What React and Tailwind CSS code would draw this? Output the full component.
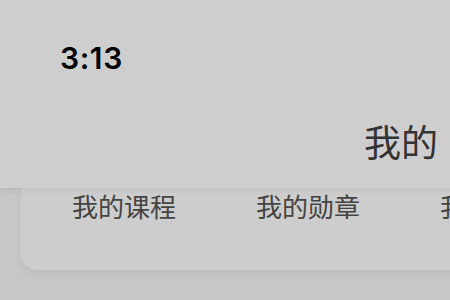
export default function App() {
  const menu = ['我的课程', '我的勋章', '我的收藏']

  return (
    <div className="w-[450px] h-[300px] overflow-hidden bg-[#c7c7c7] font-['Noto_Sans_CJK_SC',sans-serif]">
      {/* Header */}
      <div className="relative z-10 h-[188px] bg-[#cecece] shadow-[0_2px_6px_rgba(0,0,0,0.08)] flex flex-col">
        <div className="pl-[60px] pt-[43px] h-[88px]">
          <span className="font-['Inter',sans-serif] font-semibold text-[30px] tracking-[0.6px] leading-none text-black">
            3:13
          </span>
        </div>
        <div className="flex justify-end pr-[12px] pt-[35px]">
          <span className="text-[37px] leading-none text-[#333]">我的</span>
        </div>
      </div>

      {/* Menu card */}
      <div className="ml-[21px] w-[460px] h-[82px] bg-[#cdcdcd] rounded-bl-2xl shadow-[0_4px_10px_rgba(0,0,0,0.06)]">
        <div className="flex gap-[80px] pl-[51px] pt-[3px] whitespace-nowrap">
          {menu.map((item) => (
            <span key={item} className="text-[26px] leading-[30px] text-[#444]">
              {item}
            </span>
          ))}
        </div>
      </div>
    </div>
  )
}
